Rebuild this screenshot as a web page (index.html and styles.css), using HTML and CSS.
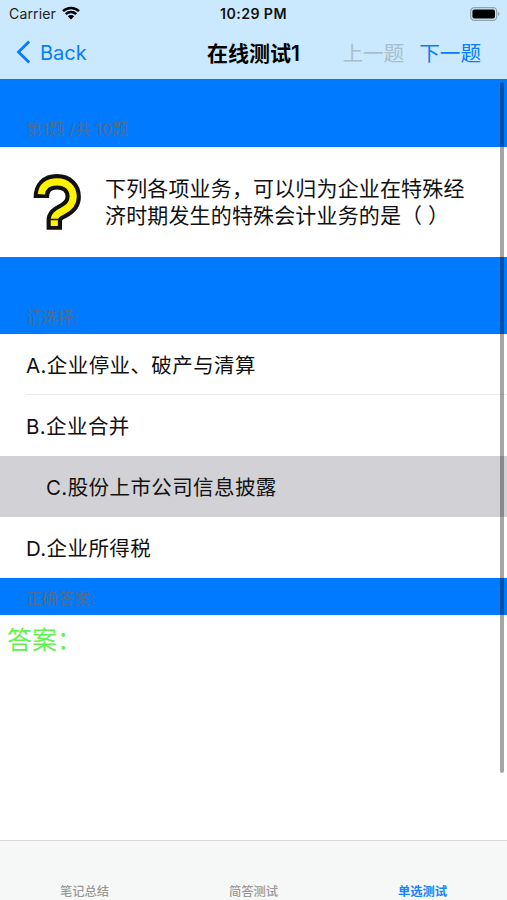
FILE: index.html
```
<!DOCTYPE html>
<html lang="zh-CN">
<head>
    <meta charset="UTF-8">
    <meta name="viewport" content="width=device-width, initial-scale=1.0">
    <title>在线测试1</title>
    <link rel="stylesheet" href="styles.css">
</head>
<body>

<div class="screen">
    <!-- Status Bar -->
    <div class="status-bar">
        <div class="carrier">
            <span>Carrier</span>
            <svg class="wifi" viewBox="0 0 18 14" width="18" height="14">
                <path d="M1 5.2a11.3 11.3 0 0 1 16 0M3.8 8.1a7.4 7.4 0 0 1 10.4 0" fill="none" stroke="#000" stroke-width="2.5"/>
                <path d="M5.8 10.3a4.5 4.5 0 0 1 6.4 0L9 13.6z"/>
            </svg>
        </div>
        <span class="clock">10:29 PM</span>
        <svg class="battery" viewBox="0 0 30 14" width="30" height="14">
            <rect x="0.7" y="0.7" width="26" height="12.6" rx="3.6" fill="none" stroke="#8fa4b0" stroke-width="1.2"/>
            <rect x="2.4" y="2.4" width="22.6" height="9.2" rx="2"/>
            <path d="M28 4.8q3 2.2 0 4.4z" fill="#8fa4b0"/>
        </svg>
    </div>

    <!-- Navigation -->
    <div class="nav-bar">
        <button class="back">
            <svg viewBox="0 0 16 24" width="16" height="24">
                <path d="M13.2 1.5 2.5 12l10.7 10.5" fill="none" stroke="#087bff" stroke-width="2.8"/>
            </svg>
            <span>Back</span>
        </button>
        <h1>在线测试1</h1>
        <div class="nav-actions">
            <button class="prev" disabled>上一题</button>
            <button class="next">下一题</button>
        </div>
    </div>

    <!-- Question and Options -->
    <div class="content">
        <div class="section-header count"><span>第1题 /共 10题</span></div>
        <div class="question">
            <svg class="question-icon" viewBox="0 0 50 60" width="50" height="60">
                <path d="M9.3 26C9.3 15.5 15 9.8 25 9.8c10 0 16.2 6.2 16.2 15 0 7-4.2 11-10.2 14s-8.7 5-8.7 9.7v9.2" fill="none" stroke="#111" stroke-width="15.4"/>
                <path d="M9.3 22.3C10 14.5 16 9.8 25 9.8c10 0 16.2 6.2 16.2 15 0 7-4.2 11-10.2 14s-8.7 5-8.7 9.7v5.6" fill="none" stroke="#fff200" stroke-width="7.2"/>
                <path d="M17 47.5h10" stroke="#222" stroke-width="1.6"/>
            </svg>
            <p>下列各项业务，可以归为企业在特殊经<br>济时期发生的特殊会计业务的是<span class="blank">（ ）</span></p>
        </div>

        <div class="section-header choose"><span>请选择:</span></div>
        <ul class="options">
            <li>A.企业停业、破产与清算</li>
            <li>B.企业合并</li>
            <li class="selected">C.股份上市公司信息披露</li>
            <li>D.企业所得税</li>
        </ul>

        <div class="section-header result"><span>正确答案:</span></div>
        <div class="answer">答案：</div>
        <div class="scroll-indicator"></div>
    </div>

    <!-- Tab Bar -->
    <div class="tab-bar">
        <a class="tab">笔记总结</a>
        <a class="tab">简答测试</a>
        <a class="tab active">单选测试</a>
    </div>
</div>

</body>
</html>
```

FILE: styles.css
```
* {
    box-sizing: border-box;
}

body {
    font-family: Inter, "Noto Sans CJK SC", sans-serif;
    background-color: #fff;
    color: #111;
    margin: 0;
}

.screen {
    display: flex;
    flex-direction: column;
    width: 507px;
    height: 900px;
    overflow: hidden;
}

button {
    font-family: inherit;
    background: none;
    border: none;
    padding: 0;
    color: #087bff;
}

.status-bar {
    display: grid;
    grid-template-columns: 1fr auto 1fr;
    align-items: center;
    height: 27px;
    padding: 0 7px 0 9px;
    background-color: #cae9ff;
    font-size: 14px;
}

.carrier {
    display: flex;
    align-items: center;
    gap: 6px;
    color: #222;
    letter-spacing: 0.15px;
}

.wifi {
    margin-top: -2px;
}

.clock {
    margin-right: 2px;
    font-weight: 600;
    font-size: 14.2px;
    letter-spacing: 0.4px;
}

.battery {
    justify-self: end;
}

.nav-bar {
    display: grid;
    grid-template-columns: 1fr auto 1fr;
    align-items: center;
    height: 52px;
    padding: 0 26px 2px 16px;
    background-color: #cae9ff;
}

.back {
    display: flex;
    align-items: center;
    gap: 8px;
    font-size: 20px;
}

.back span {
    padding-top: 2px;
}

h1 {
    margin: 0 0 0 10px;
    font-size: 21px;
    font-weight: 600;
    color: #000;
}

.nav-actions {
    display: flex;
    justify-content: flex-end;
    gap: 15px;
}

.nav-actions button {
    font-size: 20.6px;
    white-space: nowrap;
}

.nav-actions .prev {
    color: #a9bdca;
}

.content {
    position: relative;
    flex: 1;
}

.section-header {
    display: flex;
    align-items: flex-end;
    padding: 0 26px;
    background-color: #007aff;
    color: #476f98;
    font-size: 15.8px;
    font-weight: 500;
    line-height: 20px;
}

.count {
    height: 68px;
    padding-bottom: 7px;
    letter-spacing: 0.15px;
}

.choose {
    height: 77px;
    padding-bottom: 6px;
}

.result {
    height: 37px;
    padding-bottom: 6px;
    letter-spacing: 0.3px;
}

.question {
    display: flex;
    align-items: center;
    height: 110px;
    padding-left: 32px;
    gap: 23px;
}

.question p {
    margin: 0;
    font-size: 21px;
    letter-spacing: 0.15px;
    line-height: 27px;
    white-space: nowrap;
}

.blank {
    letter-spacing: 0;
}

.options {
    list-style: none;
    margin: 0;
    padding: 0;
}

.options li {
    display: flex;
    align-items: center;
    height: 61px;
    padding: 0 0 1px 26px;
    font-size: 20.5px;
    letter-spacing: 0.4px;
}

.options li:first-child {
    background: linear-gradient(#ececec, #ececec) 26px 100% / 100% 1px no-repeat;
}

.options .selected {
    padding-left: 46px;
    background-color: #d1d1d6;
}

.answer {
    padding: 7px;
    color: #5ff24f;
    font-size: 25px;
    line-height: 36px;
}

.scroll-indicator {
    position: absolute;
    top: 3px;
    right: 3px;
    width: 4px;
    height: 691px;
    border-radius: 2px;
    background-color: rgba(0, 0, 0, 0.35);
}

.tab-bar {
    display: flex;
    height: 60px;
    border-top: 1px solid #d9d9d9;
    background-color: #f6f7f7;
}

.tab {
    flex: 1;
    padding-top: 42px;
    text-align: center;
    font-size: 12.3px;
    line-height: 18px;
    font-weight: 500;
    color: #999;
}

.active {
    color: #1684ff;
    font-weight: 700;
}
```
